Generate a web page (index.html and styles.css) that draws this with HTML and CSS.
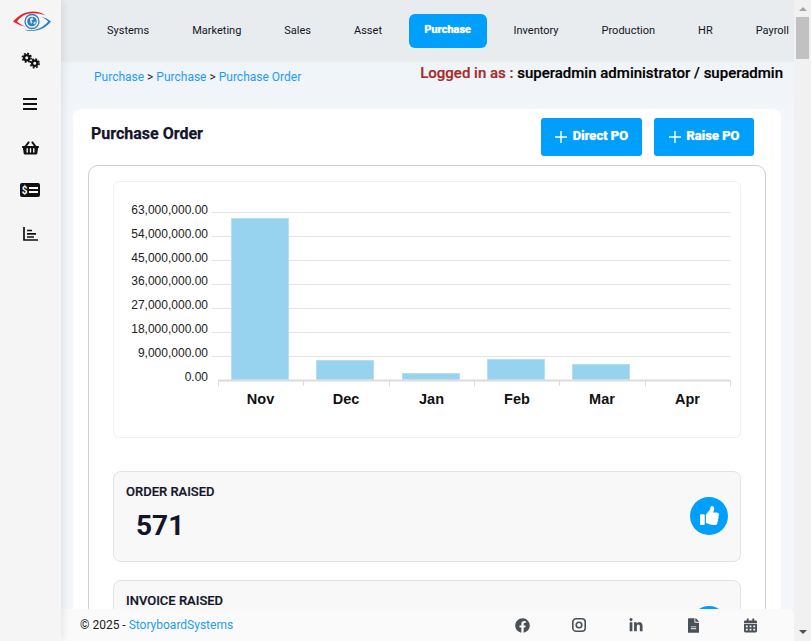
FILE: index.html
```html
<!DOCTYPE html>
<html lang="en">
<head>
<meta charset="utf-8">
<title>Purchase Order</title>
<link rel="stylesheet" href="styles.css">
</head>
<body>
<div class="shell">
<aside class="sidebar">
  <svg class="logo" viewBox="0 0 38 22" width="38" height="22">
    <path d="M0 11.500C6 5 12 1.500 20 1.500c5 0 9 1.500 12.500 4-4-1.500-8-2.300-12.500-2.300C13 3.200 7.500 6.500 4 11.500c3 2.500 6 4.500 9.500 5.500C8 16 4 14 0 11.500z" fill="#e8242f"/>
    <path d="M38 11.500c-5 6-11.500 9.500-19 9.500-3 0-5.500-.5-7.500-1.500 2.500.6 5 .8 7.500.7 6.500-.3 12-4 16.200-8.700-2-2-4.700-3.700-7.200-5 3.500 1 7.500 2.800 10 5z" fill="#2a7fc1"/>
    <circle cx="19" cy="11.500" r="7" fill="none" stroke="#2a7fc1" stroke-width="1.300"/>
    <circle cx="19" cy="11.500" r="4.800" fill="#2a7fc1"/>
    <path d="M17 8.500l2.500-1 1 2-2 1 1 2-1.500 1.500-1-3zM21 11.500l2 .5-1 2.500-1.500-.5z" fill="#cfe4f4"/>
  </svg>
  <svg class="side-icon gears" viewBox="0 0 20 18" width="19" height="17">
    <g fill="none" stroke="#111">
      <circle cx="6" cy="6" r="2.800" stroke-width="2.400"/>
      <circle cx="6" cy="6" r="4.600" stroke-width="1.700" stroke-dasharray="2 1.610"/>
      <circle cx="14.500" cy="12" r="2.800" stroke-width="2.400"/>
      <circle cx="14.500" cy="12" r="4.600" stroke-width="1.700" stroke-dasharray="2 1.610"/>
    </g>
  </svg>
  <svg class="side-icon bars-icon" viewBox="0 0 14 12" width="14" height="12">
    <path d="M0 1h14M0 6h14M0 11h14" stroke="#111" stroke-width="1.800"/>
  </svg>
  <svg class="side-icon basket" viewBox="0 0 576 512" width="17" height="16">
    <path fill="#111" d="M576 216v16c0 13.255-10.745 24-24 24h-8l-26.113 182.788C514.509 462.435 494.257 480 470.370 480H105.630c-23.887 0-44.139-17.565-47.518-41.212L32 256h-8c-13.255 0-24-10.745-24-24v-16c0-13.255 10.745-24 24-24h67.341l106.780-146.821c10.395-14.292 30.407-17.453 44.701-7.058 14.293 10.395 17.453 30.408 7.058 44.701L170.477 192h235.046L326.120 82.821c-10.395-14.292-7.234-34.306 7.059-44.701 14.291-10.395 34.306-7.235 44.701 7.058L484.659 192H552c13.255 0 24 10.745 24 24zM312 392V280c0-13.255-10.745-24-24-24s-24 10.745-24 24v112c0 13.255 10.745 24 24 24s24-10.745 24-24zm112 0V280c0-13.255-10.745-24-24-24s-24 10.745-24 24v112c0 13.255 10.745 24 24 24s24-10.745 24-24zm-224 0V280c0-13.255-10.745-24-24-24s-24 10.745-24 24v112c0 13.255 10.745 24 24 24s24-10.745 24-24z"/>
  </svg>
  <svg class="side-icon money" viewBox="0 0 20 14" width="20" height="14">
    <rect width="20" height="14" rx="2" fill="#111"/>
    <text x="4.500" y="11" class="money-sign">$</text>
    <path d="M9 5h9M9 9h9" stroke="#fff" stroke-width="2"/>
  </svg>
  <svg class="side-icon chart-icon" viewBox="0 0 15 14" width="15" height="14">
    <path d="M1 0v13h14" fill="none" stroke="#111" stroke-width="1.700"/>
    <path d="M4 3.500h5M4 6.800h9M4 10h7" stroke="#111" stroke-width="1.700"/>
  </svg>
</aside>

<div class="column">
  <header class="topbar">
    <nav class="nav">
      <a class="nav-item">Systems</a>
      <a class="nav-item">Marketing</a>
      <a class="nav-item">Sales</a>
      <a class="nav-item">Asset</a>
      <a class="nav-item nav-active">Purchase</a>
      <a class="nav-item">Inventory</a>
      <a class="nav-item">Production</a>
      <a class="nav-item">HR</a>
      <a class="nav-item">Payroll</a>
    </nav>
  </header>

  <main class="page">
    <div class="crumb-row">
      <div class="crumbs"><a>Purchase</a> &gt; <a>Purchase</a> &gt; <a>Purchase Order</a></div>
      <div class="login"><span class="login-label">Logged in as : </span>superadmin administrator / superadmin</div>
    </div>

    <section class="card">
      <div class="card-head">
        <h1 class="title">Purchase Order</h1>
        <div class="actions">
          <button class="btn"><svg class="plus" viewBox="0 0 12 12" width="12" height="12"><path d="M6 0v12M0 6h12"/></svg><span>Direct PO</span></button>
          <button class="btn"><svg class="plus" viewBox="0 0 12 12" width="12" height="12"><path d="M6 0v12M0 6h12"/></svg><span>Raise PO</span></button>
        </div>
      </div>

      <div class="box">
        <div class="chart-panel">
          <svg class="chart" viewBox="0 0 626 254" width="626" height="254">
            <g class="grid">
              <path d="M98 30.500h519M98 54.500h519M98 78.500h519M98 102.500h519M98 126.500h519M98 150.500h519M98 174.500h519"/>
            </g>
            <g class="ticks">
              <text x="94" y="32">63,000,000.00</text>
              <text x="94" y="56">54,000,000.00</text>
              <text x="94" y="80">45,000,000.00</text>
              <text x="94" y="103">36,000,000.00</text>
              <text x="94" y="127">27,000,000.00</text>
              <text x="94" y="151">18,000,000.00</text>
              <text x="94" y="175">9,000,000.00</text>
              <text x="94" y="199">0.00</text>
            </g>
            <g class="bars">
              <rect x="117.500" y="36.500" width="57" height="161"/>
              <rect x="202.500" y="178.500" width="57" height="19"/>
              <rect x="288.500" y="191.500" width="57" height="6"/>
              <rect x="373.500" y="177.500" width="57" height="20"/>
              <rect x="458.500" y="182.500" width="57" height="15"/>
            </g>
            <path class="axis" d="M104 198.500h512"/>
            <path class="axis-ticks" d="M104.500 198v6M189.500 198v6M275.500 198v6M360.500 198v6M445.500 198v6M531.500 198v6M616.500 198v6"/>
            <g class="cats">
              <text x="146.500" y="222">Nov</text>
              <text x="232" y="222">Dec</text>
              <text x="317.500" y="222">Jan</text>
              <text x="403" y="222">Feb</text>
              <text x="488" y="222">Mar</text>
              <text x="573.500" y="222">Apr</text>
            </g>
          </svg>
        </div>

        <div class="stat">
          <div>
            <div class="stat-label">ORDER RAISED</div>
            <div class="stat-value">571</div>
          </div>
          <span class="stat-icon">
            <svg viewBox="0 0 512 512" width="19" height="19"><path fill="#fff" d="M104 224H24c-13.255 0-24 10.745-24 24v240c0 13.255 10.745 24 24 24h80c13.255 0 24-10.745 24-24V248c0-13.255-10.745-24-24-24zM384 81.452c0 42.416-25.970 66.208-33.277 94.548h101.723c33.397 0 59.397 27.746 59.553 58.098.084 17.938-7.546 37.249-19.439 49.197l-.11.11c9.836 23.337 8.237 56.037-9.308 79.469 8.681 25.895-.069 57.704-16.382 74.757 4.298 17.598 2.244 32.575-6.148 44.632C440.202 511.587 389.616 512 346.839 512l-2.845-.001c-48.287-.017-87.806-17.598-119.560-31.725-15.957-7.099-36.821-15.887-52.651-16.178-6.540-.12-11.783-5.457-11.783-11.998v-213.770c0-3.200 1.282-6.271 3.558-8.521 39.614-39.144 56.648-80.587 89.117-113.111 14.804-14.832 20.188-37.236 25.393-58.902C282.515 39.293 291.817 0 312 0c24 0 72 8 72 81.452z"/></svg>
          </span>
        </div>

        <div class="stat">
          <div>
            <div class="stat-label">INVOICE RAISED</div>
          </div>
          <span class="stat-icon"></span>
        </div>
      </div>
    </section>
  </main>

  <footer class="footer">
    <div class="copy">© 2025 - <a>StoryboardSystems</a></div>
    <div class="foot-icons">
      <span class="foot-icon"><svg viewBox="0 0 512 512" width="15" height="15"><path d="M504 256C504 119 393 8 256 8S8 119 8 256c0 123.780 90.690 226.380 209.250 245V327.690h-63V256h63v-54.640c0-62.150 37-96.480 93.670-96.480 27.140 0 55.520 4.840 55.520 4.840v61h-31.280c-30.800 0-40.410 19.120-40.410 38.730V256h68.780l-11 71.690h-57.780V501C413.310 482.380 504 379.780 504 256z"/></svg></span>
      <span class="foot-icon"><svg viewBox="0 0 14 14" width="14" height="14"><rect x=".8" y=".8" width="12.400" height="12.400" rx="3.300" class="ig"/><circle cx="7" cy="7" r="2.800" class="ig"/></svg></span>
      <span class="foot-icon"><svg viewBox="0 0 448 512" width="14" height="15"><path d="M100.280 448H7.400V148.900h92.880zM53.790 108.100C24.090 108.100 0 83.500 0 53.800a53.790 53.790 0 0 1 107.580 0c0 29.700-24.100 54.300-53.790 54.300zM447.900 448h-92.680V302.400c0-34.700-.7-79.200-48.290-79.200-48.290 0-55.690 37.700-55.690 76.700V448h-92.780V148.900h89.080v40.800h1.300c12.400-23.500 42.690-48.300 87.880-48.300 94 0 111.280 61.900 111.280 142.300V448z"/></svg></span>
      <span class="foot-icon"><svg viewBox="0 0 384 512" width="11" height="15"><path d="M224 136V0H24C10.700 0 0 10.700 0 24v464c0 13.300 10.700 24 24 24h336c13.300 0 24-10.700 24-24V160H248c-13.200 0-24-10.800-24-24zm64 236c0 6.600-5.400 12-12 12H108c-6.600 0-12-5.400-12-12v-8c0-6.600 5.400-12 12-12h168c6.600 0 12 5.400 12 12v8zm0-64c0 6.600-5.400 12-12 12H108c-6.600 0-12-5.400-12-12v-8c0-6.600 5.400-12 12-12h168c6.600 0 12 5.400 12 12v8zm96-186.100v6.100H256V0h6.100c6.400 0 12.500 2.500 17 7l97.900 98c4.500 4.500 7 10.600 7 16.900z"/></svg></span>
      <span class="foot-icon"><svg viewBox="0 0 14 15" width="13" height="15"><path fill-rule="evenodd" d="M3 0h2v2h4V0h2v2h1.500A1.500 1.500 0 0 1 14 3.500V5H0V3.500A1.500 1.500 0 0 1 1.500 2H3zM0 6h14v7.500a1.500 1.500 0 0 1-1.500 1.500h-11A1.500 1.500 0 0 1 0 13.500zm2 1.500v2h2v-2zm4 0v2h2v-2zm4 0v2h2v-2zm-8 3.500v2h2v-2zm4 0v2h2v-2zm4 0v2h2v-2z"/></svg></span>
    </div>
  </footer>
</div>

<div class="scrollbar">
  <span class="arrow-up"></span>
  <span class="thumb"></span>
  <span class="arrow-down"></span>
</div>
</div>
</body>
</html>
```

FILE: styles.css
```css
* { box-sizing: border-box; }
html, body { height: 100%; }
body {
  margin: 0;
  font-family: Roboto, "Liberation Sans", sans-serif;
  font-size: 12px;
  color: #14142b;
  background: #f2f5f9;
  overflow: hidden;
}
a { color: #1f9bf5; text-decoration: none; }

.shell {
  height: 100vh;
  display: flex;
  overflow: hidden;
}

.sidebar {
  flex: none;
  width: 61px;
  z-index: 3;
  background: #f5f5f6;
  box-shadow: 0 0 10px rgba(0, 0, 0, .12);
  display: flex;
  flex-direction: column;
  align-items: center;
  padding: 10px 1px 0 0;
}
.logo { flex: none; margin: 0 0 20px 4px; }
.side-icon { flex: none; }
.bars-icon { margin-top: 29px; }
.basket { margin-top: 30px; }
.money { margin-top: 27px; }
.chart-icon { margin-top: 30px; }

.column {
  flex: 1;
  min-width: 0;
  display: flex;
  flex-direction: column;
  overflow: hidden;
}

.topbar {
  flex: none;
  height: 62px;
  background: #e9ecef;
  overflow: hidden;
}
.nav {
  display: flex;
  align-items: center;
  gap: 11px;
  height: 62px;
  padding-left: 30px;
}
.nav-item {
  flex: none;
  padding: 0 16px;
  height: 34px;
  line-height: 33px;
  border-radius: 6px;
  color: #14141e;
  font-size: 11px;
}
.nav-active {
  background: #009ffb;
  color: #fff;
  font-weight: 700;
  line-height: 32px;
  padding: 0 15.500px;
  text-shadow: 0 0 1px #fff;
}

.page {
  flex: 1;
  min-height: 0;
  overflow: hidden;
  padding: 0 13px 0 12px;
  background: linear-gradient(#eff4f8, #f3f6fa 60px);
}
.crumb-row {
  height: 47px;
  display: flex;
  justify-content: space-between;
  padding: 2px 0 0 21px;
}
.crumbs { padding-top: 6px; font-size: 12px; color: #222; }
.login {
  font-size: 15px;
  font-weight: 500;
  color: #000;
  margin-right: -2px;
  -webkit-text-stroke: .2px currentColor;
}
.login-label { color: #a52a2a; }

.card {
  background: #fff;
  border-radius: 8px;
  padding: 9px 15px 0;
}
.card-head {
  display: flex;
  justify-content: space-between;
  height: 47px;
}
.title {
  margin: 6px 0 0 3px;
  font-size: 16px;
  font-weight: 700;
  line-height: 20px;
  color: #14142b;
  -webkit-text-stroke: .25px currentColor;
}
.actions { display: flex; gap: 12px; margin-right: 12px; }
.btn {
  height: 38px;
  width: 101px;
  border: 0;
  border-radius: 3px;
  background: #009ffb;
  color: #fff;
  font: 700 13px Roboto, sans-serif;
  text-shadow: 0 0 1px #fff;
  padding: 0 0 3px;
  display: flex;
  align-items: center;
  justify-content: center;
  gap: 6px;
}
.btn + .btn { width: 100px; }
.plus { flex: none; margin-top: 3px; }
.plus path { stroke: #fff; stroke-width: 1.400; fill: none; }

.box {
  border: 1px solid #cfcfcf;
  border-radius: 10px;
  padding: 15px 24px 0;
}
.chart-panel {
  height: 257px;
  border: 1px solid #f1f1f3;
  border-radius: 6px;
  margin-bottom: 33px;
}
.chart { display: block; }
.grid path { stroke: #e5e5e5; fill: none; }
.ticks text {
  font: 12px "Liberation Sans", sans-serif;
  text-anchor: end;
  fill: #222;
}
.bars rect { fill: #97d3ef; stroke: #b3dff3; }
.axis { stroke: #dcdcdc; stroke-width: 2; }
.axis-ticks { stroke: #dcdcdc; }
.cats text {
  font: 700 14.500px "Liberation Sans", sans-serif;
  text-anchor: middle;
  fill: #111;
}

.stat {
  height: 91px;
  margin-bottom: 18px;
  background: #f8f8f9;
  border: 1px solid #e2e3e8;
  border-radius: 8px;
  display: flex;
  justify-content: space-between;
  align-items: center;
  padding: 0 12px;
}
.stat > div { align-self: flex-start; padding-top: 12px; }
.stat-label { font-size: 13px; font-weight: 500; color: #14142b; line-height: 15px; -webkit-text-stroke: .2px currentColor; }
.stat-value {
  font-size: 28px;
  font-weight: 700;
  line-height: 36px;
  margin: 9px 0 0 10px;
  color: #14142b;
}
.stat-icon {
  width: 38px;
  height: 38px;
  margin-top: -2px;
  border-radius: 50%;
  background: #009ffb;
  display: flex;
  align-items: center;
  justify-content: center;
}

.footer {
  flex: none;
  height: 32px;
  margin-top: -1px;
  z-index: 2;
  background: #fafafa;
  border-top-right-radius: 6px;
  display: flex;
  align-items: center;
  justify-content: space-between;
  padding: 0 15.500px 0 19px;
  font-size: 12px;
  color: #222;
}
.foot-icons { display: flex; align-items: center; }
.foot-icon { width: 57px; display: flex; justify-content: center; }
.foot-icon svg { fill: #495057; display: block; }
.foot-icon .ig { fill: none; stroke: #495057; stroke-width: 1.600; }
.money-sign { font: 700 10px Roboto, sans-serif; fill: #fff; text-anchor: middle; }

.scrollbar {
  flex: none;
  width: 17px;
  background: #f1f1f1;
  display: flex;
  flex-direction: column;
  align-items: center;
  padding-top: 7px;
}
.arrow-up {
  width: 0; height: 0;
  border: 4px solid transparent;
  border-top: 0;
  border-bottom: 4px solid #a3a3a3;
}
.thumb {
  width: 13px;
  height: 42px;
  margin-top: 6px;
  background: #c1c1c1;
}
.arrow-down {
  width: 0; height: 0;
  margin-top: auto;
  margin-bottom: 7px;
  border: 4px solid transparent;
  border-bottom: 0;
  border-top: 4px solid #505050;
}
```
